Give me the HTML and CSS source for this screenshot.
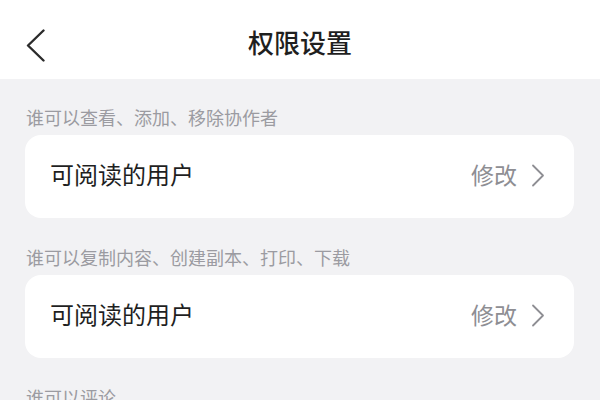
FILE: index.html
```html
<!DOCTYPE html>
<html lang="zh">
<head>
<meta charset="utf-8">
<link rel="stylesheet" href="styles.css">
</head>
<body>
<div class="page">
  <header class="topbar">
    <span class="back">
      <svg width="20" height="34" viewBox="0 0 20 34"><polyline points="17.5,1.5 2,16.5 17.5,31.5" fill="none" stroke="#2b2b2b" stroke-width="2.4" stroke-linecap="round" stroke-linejoin="round"/></svg>
    </span>
    <h1 class="title">权限设置</h1>
  </header>
  <main class="content">
    <section class="group">
      <div class="label">谁可以查看、添加、移除协作者</div>
      <div class="card">
        <span class="card-text">可阅读的用户</span>
        <span class="action">修改
          <svg class="chev" width="14" height="23" viewBox="0 0 14 23"><polyline points="2,1.5 12,11.5 2,21.5" fill="none" stroke="#8e8e93" stroke-width="1.8" stroke-linecap="round" stroke-linejoin="round"/></svg>
        </span>
      </div>
    </section>
    <section class="group">
      <div class="label">谁可以复制内容、创建副本、打印、下载</div>
      <div class="card">
        <span class="card-text">可阅读的用户</span>
        <span class="action">修改
          <svg class="chev" width="14" height="23" viewBox="0 0 14 23"><polyline points="2,1.5 12,11.5 2,21.5" fill="none" stroke="#8e8e93" stroke-width="1.8" stroke-linecap="round" stroke-linejoin="round"/></svg>
        </span>
      </div>
    </section>
    <section class="group">
      <div class="label">谁可以评论</div>
    </section>
  </main>
</div>
</body>
</html>
```

FILE: styles.css
```css
html, body {
  margin: 0;
  padding: 0;
  background: #f2f2f4;
}
body {
  font-family: "Noto Sans CJK SC", "Noto Sans", sans-serif;
  width: 600px;
  height: 400px;
  overflow: hidden;
}
.page {
  display: flex;
  flex-direction: column;
}
.topbar {
  height: 79px;
  background: #ffffff;
  display: flex;
  align-items: center;
  justify-content: center;
  position: relative;
}
.back {
  position: absolute;
  left: 26px;
  top: 29px;
  display: block;
  line-height: 0;
}
.title {
  margin: 0;
  font-size: 26px;
  font-weight: 500;
  color: #1f1f1f;
  line-height: 30px;
  margin-top: 4px;
}
.content {
  padding: 26px 26px 0 25px;
}
.group {
  margin-bottom: 27px;
}
.label {
  font-size: 18px;
  line-height: 24px;
  color: #9b9ba1;
  padding-left: 1px;
  margin-bottom: 6px;
}
.card {
  height: 83px;
  background: #ffffff;
  border-radius: 16px;
  display: flex;
  align-items: center;
  justify-content: space-between;
  padding: 0 29px 0 25px;
}
.card-text {
  font-size: 24px;
  color: #1f1f1f;
  line-height: 30px;
  padding-bottom: 5px;
}
.action {
  display: flex;
  align-items: center;
  gap: 14px;
  font-size: 23px;
  color: #8e8e93;
  line-height: 30px;
  padding-bottom: 5px;
}
.chev {
  display: block;
  margin-top: 3px;
}
```
